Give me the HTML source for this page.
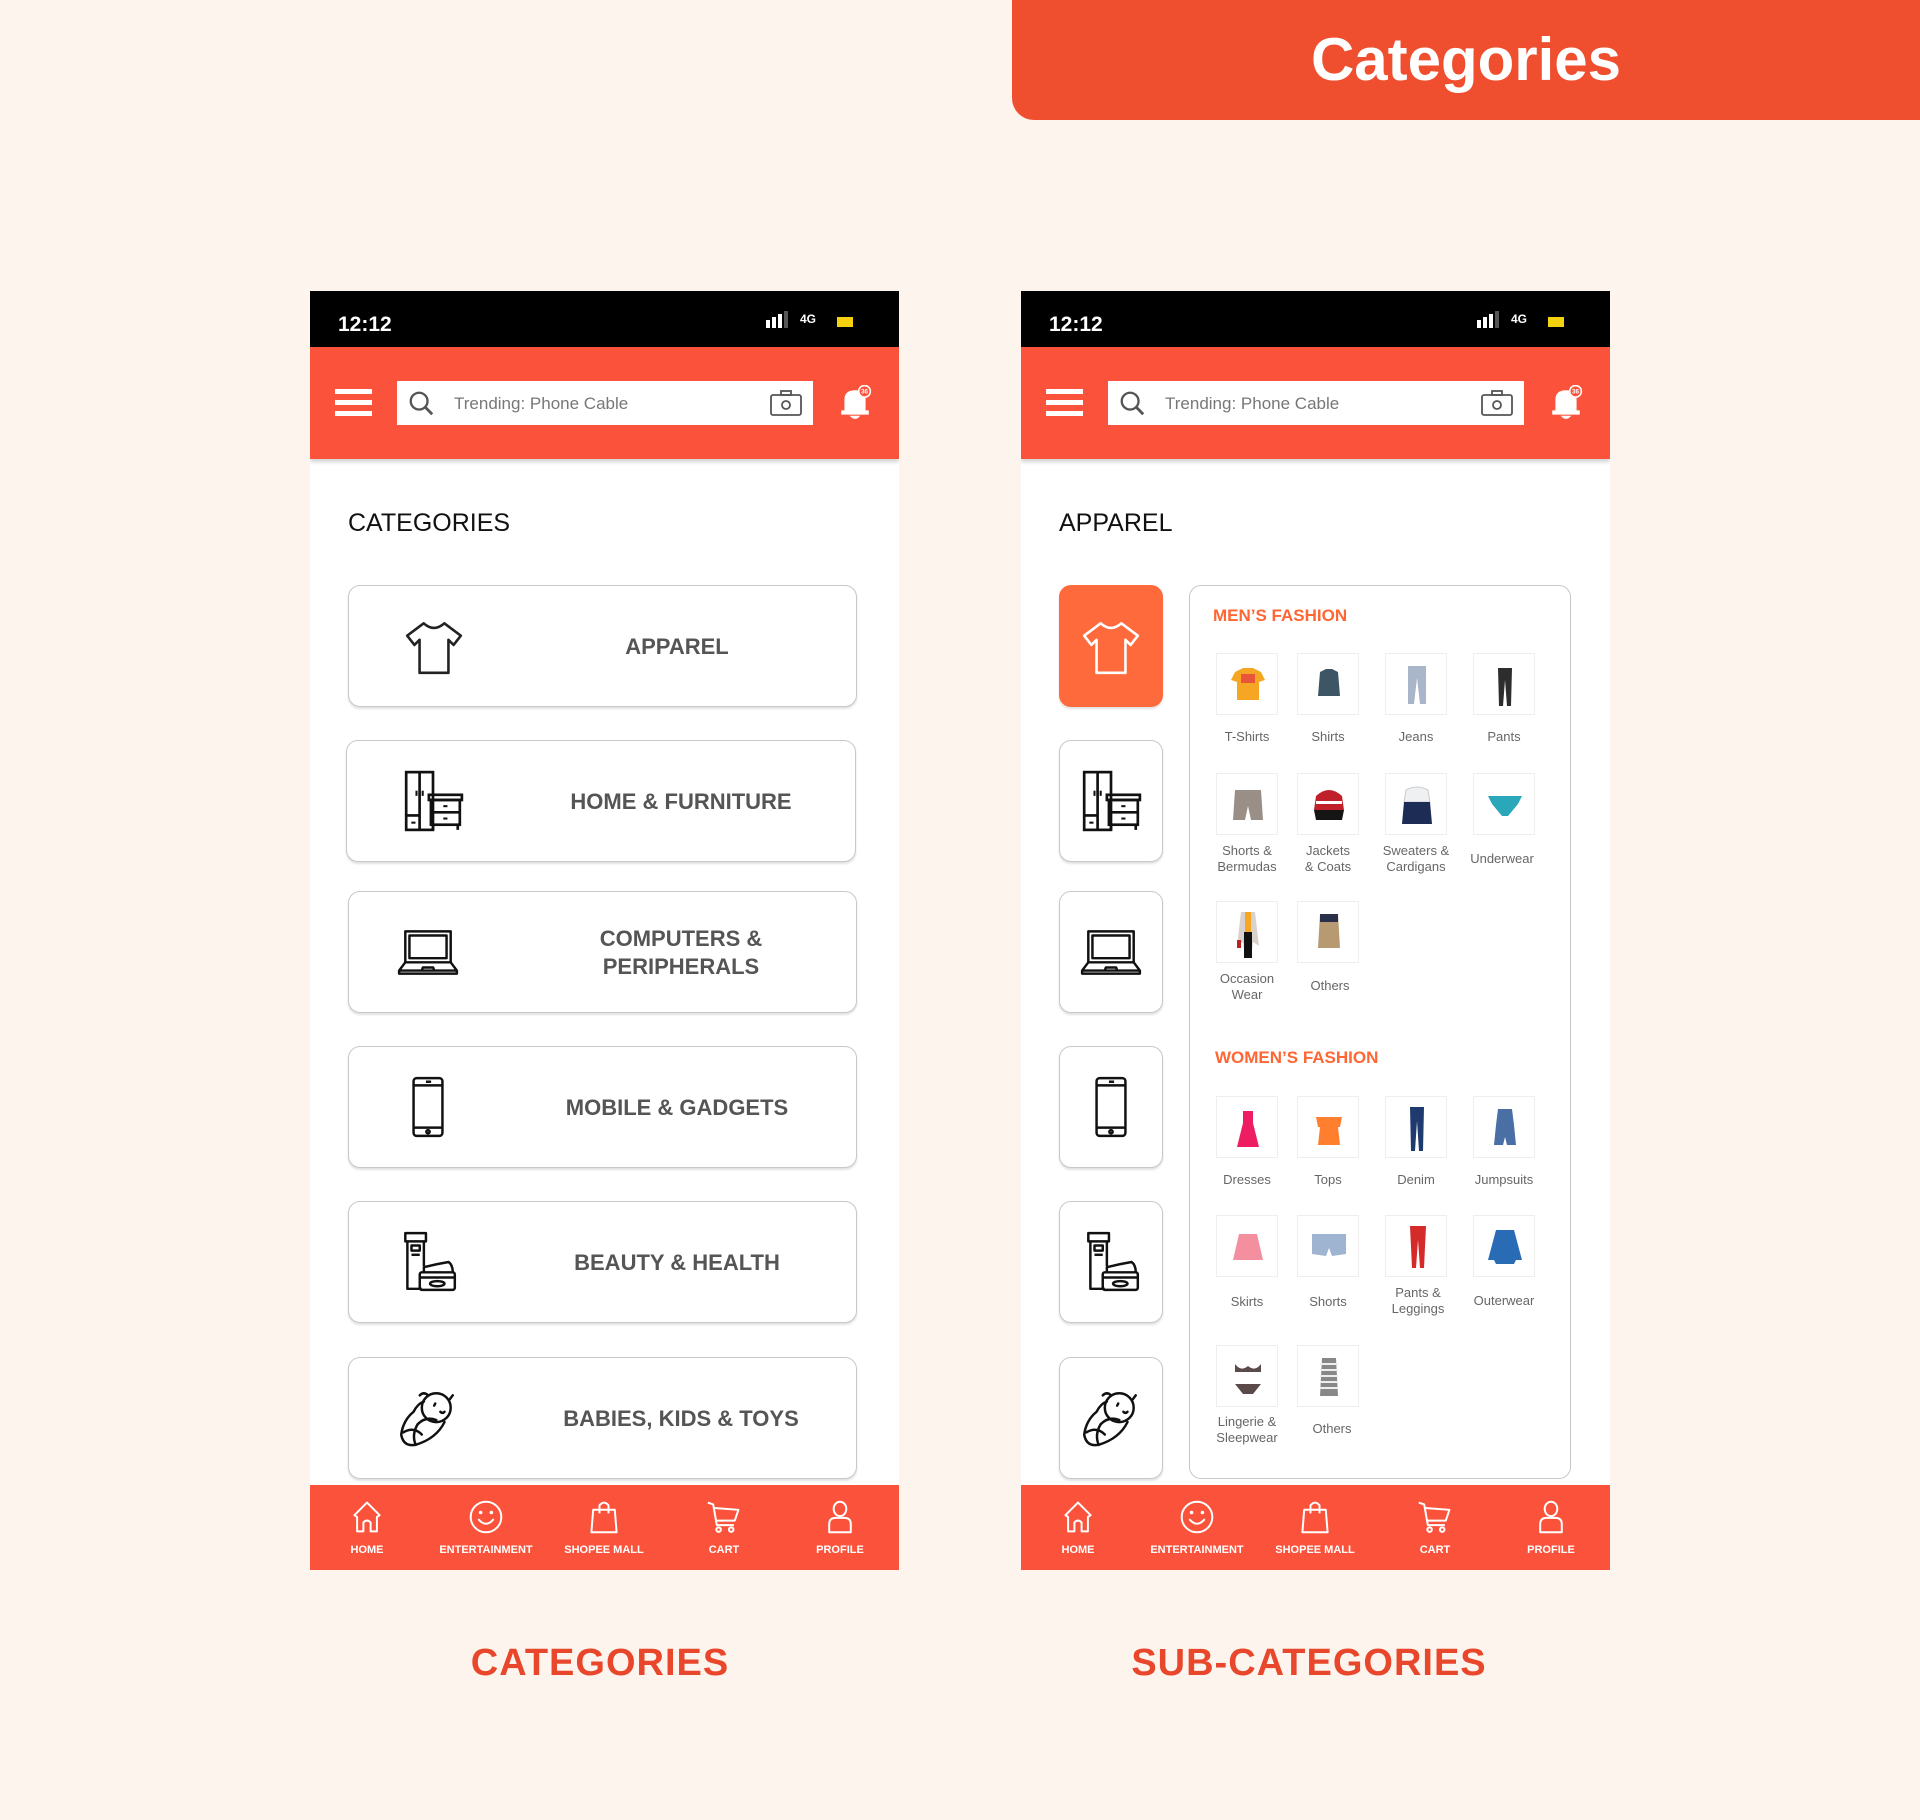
<!DOCTYPE html>
<html><head><meta charset="utf-8">
<style>
*{margin:0;padding:0;box-sizing:border-box}
body{width:1920px;height:1820px;background:#fdf4ee;position:relative;overflow:hidden;font-family:"Liberation Sans",sans-serif}
.abs{position:absolute}
.banner{left:1012px;top:0;width:908px;height:120px;background:#ef4f2e;border-radius:0 0 0 22px;color:#fff;font-weight:bold;font-size:60px;text-align:center;line-height:120px}
.phone{top:291px;width:589px;height:1279px;background:#fff;overflow:hidden}
.status{left:0;top:0;width:589px;height:56px;background:#000;color:#fff}
.time{left:28px;top:22px;font-size:21px;font-weight:bold}
.hdr{left:0;top:56px;width:589px;height:112px;background:#fb533b;box-shadow:0 3px 4px rgba(0,0,0,.18)}
.search{left:87px;top:34px;width:416px;height:44px;background:#fff}
.search span{position:absolute;left:57px;top:13px;font-size:17px;color:#777}
.title{font-size:25px;color:#111;top:218px}
.card{border:1.5px solid #c8c8c8;border-radius:12px;background:#fff;box-shadow:0 2px 2px rgba(0,0,0,.12)}
.ctext{position:absolute;color:#555;font-size:22px;font-weight:bold;text-align:center;line-height:28px}
.nav{left:0;top:1194px;width:589px;height:85px;background:#fb533b}
.ni{position:absolute;top:0;width:120px;margin-left:-60px;text-align:center;color:#fff;font-size:11px;font-weight:bold}
.ni svg{display:block;margin:14px auto 9px}
.lbl{color:#e8472b;font-weight:bold;font-size:38px;letter-spacing:1px;top:1642px;text-align:center;width:600px}
.sec{color:#ff6633;font-size:17px;font-weight:bold}
.it{position:absolute;width:62px;height:62px;border:1px solid #eee;background:#fff}
.il{position:absolute;width:90px;margin-left:-45px;text-align:center;font-size:13px;color:#666;line-height:16px}
</style></head><body>
<svg width="0" height="0" style="position:absolute">
<defs>
<symbol id="tee" viewBox="0 0 64 64"><path d="M22 10 Q32 19 42 10 L58 22 L51 31 L46 26 L46 58 L18 58 L18 26 L13 31 L6 22 Z" fill="none" stroke="#222" stroke-width="2.5" stroke-linejoin="round"/></symbol>
<symbol id="tee2" viewBox="0 0 64 64"><path d="M22 10 Q32 19 42 10 L58 22 L51 31 L46 26 L46 58 L18 58 L18 26 L13 31 L6 22 Z" fill="none" stroke="#fff" stroke-width="2.5" stroke-linejoin="round"/></symbol>
<symbol id="furn" viewBox="0 0 64 64"><g fill="none" stroke="#111" stroke-width="2.6"><rect x="6" y="4" width="26" height="56"/><line x1="19" y1="4" x2="19" y2="60"/><line x1="6" y1="46" x2="19" y2="46"/><rect x="28" y="26" width="32" height="5"/><rect x="30" y="31" width="28" height="24"/><line x1="30" y1="43" x2="58" y2="43"/><line x1="32" y1="55" x2="32" y2="60"/><line x1="56" y1="55" x2="56" y2="60"/></g><g fill="#111"><rect x="15" y="22" width="2" height="5"/><rect x="21" y="22" width="2" height="5"/><rect x="11" y="52" width="4" height="2"/><rect x="42" y="36" width="4" height="2"/><rect x="42" y="48" width="4" height="2"/></g></symbol>
<symbol id="lap" viewBox="0 0 64 64"><g fill="none" stroke="#111" stroke-width="2.4" stroke-linejoin="round"><rect x="10" y="12" width="44" height="30"/><rect x="14" y="16" width="36" height="22"/><path d="M10 42 L4 50 L4 53 L60 53 L60 50 L54 42"/><line x1="4" y1="50" x2="60" y2="50"/><path d="M26 50 L27 47 L37 47 L38 50"/></g></symbol>
<symbol id="mob" viewBox="0 0 64 64"><g fill="none" stroke="#111" stroke-width="2.4"><rect x="18" y="4" width="28" height="56" rx="3"/><line x1="18" y1="11" x2="46" y2="11"/><line x1="18" y1="52" x2="46" y2="52"/><circle cx="32" cy="56" r="1.6"/><line x1="30" y1="7.5" x2="35" y2="7.5"/></g></symbol>
<symbol id="bea" viewBox="0 0 64 64"><g fill="none" stroke="#111" stroke-width="2.4" stroke-linejoin="round"><rect x="10" y="4" width="20" height="8"/><path d="M12 12 L12 58 L26 58"/><path d="M28 12 L28 36"/><rect x="16" y="16" width="8" height="5"/><line x1="16" y1="25" x2="24" y2="25"/><rect x="24" y="42" width="34" height="17" rx="2"/><path d="M28 42 L28 37 Q40 34 52 32 Q56 35 56 42"/><line x1="24" y1="47" x2="58" y2="47"/><ellipse cx="41" cy="53" rx="7" ry="2.5"/></g></symbol>
<symbol id="baby" viewBox="0 0 64 64"><g fill="none" stroke="#111" stroke-width="2.4" stroke-linecap="round"><circle cx="40" cy="22" r="14"/><path d="M28 16 Q22 18 18 26 Q8 34 6 48 Q8 60 20 58 Q40 52 48 36"/><path d="M32 10 Q28 6 24 10"/><path d="M8 46 Q18 40 26 48"/><path d="M20 58 Q16 48 22 38 Q30 30 40 34"/><path d="M53 14 L56 10"/><path d="M38 20 L39 18"/><path d="M44 26 Q46 28 48 26"/></g></symbol>
<symbol id="home" viewBox="0 0 40 40"><path d="M6 18 L20 4 L34 18 L31 20 L31 36 L24 36 L24 26 Q20 22 16 26 L16 36 L9 36 L9 20 Z" fill="none" stroke="#fff" stroke-width="2.2" stroke-linejoin="round"/></symbol>
<symbol id="smile" viewBox="0 0 40 40"><g fill="none" stroke="#fff" stroke-width="2.2"><circle cx="20" cy="20" r="17"/><path d="M12 23 Q20 32 28 23" stroke-linecap="round"/></g><circle cx="14" cy="15" r="2" fill="#fff"/><circle cx="26" cy="15" r="2" fill="#fff"/></symbol>
<symbol id="bag" viewBox="0 0 40 40"><g fill="none" stroke="#fff" stroke-width="2.2" stroke-linejoin="round"><path d="M8 12 L32 12 L34 37 L6 37 Z"/><path d="M15 16 L15 7 Q20 1 25 7 L25 16"/></g></symbol>
<symbol id="cart" viewBox="0 0 40 40"><g fill="none" stroke="#fff" stroke-width="2.2" stroke-linejoin="round"><path d="M2 4 L8 6 L12 29 L31 29"/><path d="M9 10 L36 12 L32 24 L11 24"/><circle cx="14" cy="34" r="2.5"/><circle cx="28" cy="34" r="2.5"/></g></symbol>
<symbol id="user" viewBox="0 0 40 40"><g fill="none" stroke="#fff" stroke-width="2.2"><ellipse cx="20" cy="11" rx="7" ry="8"/><path d="M8 37 L8 28 Q8 21 15 21 L25 21 Q32 21 32 28 L32 37 Z" stroke-linejoin="round"/></g></symbol>
<symbol id="srch" viewBox="0 0 30 30"><circle cx="13" cy="13" r="9" fill="none" stroke="#555" stroke-width="2.5"/><line x1="20" y1="20" x2="27" y2="27" stroke="#555" stroke-width="3"/></symbol>
<symbol id="cam" viewBox="0 0 32 26"><g fill="none" stroke="#555" stroke-width="1.8"><rect x="1" y="5" width="30" height="20" rx="2"/><rect x="11" y="1" width="10" height="4"/><circle cx="16" cy="15" r="4"/></g></symbol>
<symbol id="bell" viewBox="0 0 34 34"><path d="M7 24 L7 14 Q7 5 17 5 Q27 5 27 14 L27 24 L30 24 L30 28 L4 28 L4 24 Z" fill="#fff"/><path d="M12 29 Q17 35 22 29 Z" fill="#fff"/><circle cx="26" cy="6" r="5.5" fill="#fb533b" stroke="#fff" stroke-width="1.5"/><text x="26" y="8" font-size="6" fill="#fff" text-anchor="middle" font-weight="bold" font-family="Liberation Sans">36</text></symbol>
</defs></svg>

<div class="abs banner">Categories</div>

<!-- LEFT PHONE -->
<div class="abs phone" style="left:310px">
 <div class="abs status">
  <div class="abs time">12:12</div>
  <div class="abs" style="left:456px;top:29px;width:4px;height:8px;background:#fff"></div>
  <div class="abs" style="left:462px;top:26px;width:4px;height:11px;background:#fff"></div>
  <div class="abs" style="left:468px;top:23px;width:4px;height:14px;background:#fff"></div>
  <div class="abs" style="left:474px;top:20px;width:4px;height:17px;background:#555"></div>
  <div class="abs" style="left:490px;top:21px;font-size:12px;font-weight:bold">4G</div>
  <div class="abs" style="left:527px;top:26px;width:16px;height:10px;background:#f5d20f"></div>
 </div>
 <div class="abs hdr">
  <div class="abs" style="left:25px;top:42px;width:37px;height:5px;background:#fff"></div>
  <div class="abs" style="left:25px;top:53px;width:37px;height:5px;background:#fff"></div>
  <div class="abs" style="left:25px;top:64px;width:37px;height:5px;background:#fff"></div>
  <div class="abs search"><svg class="abs" style="left:10px;top:8px" width="28" height="28"><use href="#srch"/></svg><span>Trending: Phone Cable</span><svg class="abs" style="left:373px;top:9px" width="32" height="26"><use href="#cam"/></svg></div>
  <svg class="abs" style="left:527px;top:38px" width="36" height="36"><use href="#bell"/></svg>
 </div>
 <div class="abs title" style="left:38px">CATEGORIES</div>
 <div class="abs card" style="left:38px;top:294px;width:509px;height:122px"><svg class="abs" style="left:52px;top:27px" width="66" height="66"><use href="#tee"/></svg><div class="ctext" style="left:158px;width:340px;top:47px">APPAREL</div></div>
 <div class="abs card" style="left:36px;top:449px;width:510px;height:122px"><svg class="abs" style="left:53px;top:27px" width="66" height="66"><use href="#furn"/></svg><div class="ctext" style="left:164px;width:340px;top:47px">HOME &amp; FURNITURE</div></div>
 <div class="abs card" style="left:38px;top:600px;width:509px;height:122px"><svg class="abs" style="left:46px;top:27px" width="66" height="66"><use href="#lap"/></svg><div class="ctext" style="left:162px;width:340px;top:33px">COMPUTERS &amp;<br>PERIPHERALS</div></div>
 <div class="abs card" style="left:38px;top:755px;width:509px;height:122px"><svg class="abs" style="left:46px;top:27px" width="66" height="66"><use href="#mob"/></svg><div class="ctext" style="left:158px;width:340px;top:47px">MOBILE &amp; GADGETS</div></div>
 <div class="abs card" style="left:38px;top:910px;width:509px;height:122px"><svg class="abs" style="left:46px;top:27px" width="66" height="66"><use href="#bea"/></svg><div class="ctext" style="left:158px;width:340px;top:47px">BEAUTY &amp; HEALTH</div></div>
 <div class="abs card" style="left:38px;top:1066px;width:509px;height:122px"><svg class="abs" style="left:46px;top:27px" width="66" height="66"><use href="#baby"/></svg><div class="ctext" style="left:162px;width:340px;top:47px">BABIES, KIDS &amp; TOYS</div></div>
 <div class="abs nav">
  <div class="ni" style="left:57px"><svg width="36" height="36"><use href="#home"/></svg>HOME</div>
  <div class="ni" style="left:176px"><svg width="36" height="36"><use href="#smile"/></svg>ENTERTAINMENT</div>
  <div class="ni" style="left:294px"><svg width="36" height="36"><use href="#bag"/></svg>SHOPEE MALL</div>
  <div class="ni" style="left:414px"><svg width="36" height="36"><use href="#cart"/></svg>CART</div>
  <div class="ni" style="left:530px"><svg width="36" height="36"><use href="#user"/></svg>PROFILE</div>
 </div>
</div>

<!-- RIGHT PHONE -->
<div class="abs phone" style="left:1021px">
 <div class="abs status">
  <div class="abs time">12:12</div>
  <div class="abs" style="left:456px;top:29px;width:4px;height:8px;background:#fff"></div>
  <div class="abs" style="left:462px;top:26px;width:4px;height:11px;background:#fff"></div>
  <div class="abs" style="left:468px;top:23px;width:4px;height:14px;background:#fff"></div>
  <div class="abs" style="left:474px;top:20px;width:4px;height:17px;background:#555"></div>
  <div class="abs" style="left:490px;top:21px;font-size:12px;font-weight:bold">4G</div>
  <div class="abs" style="left:527px;top:26px;width:16px;height:10px;background:#f5d20f"></div>
 </div>
 <div class="abs hdr">
  <div class="abs" style="left:25px;top:42px;width:37px;height:5px;background:#fff"></div>
  <div class="abs" style="left:25px;top:53px;width:37px;height:5px;background:#fff"></div>
  <div class="abs" style="left:25px;top:64px;width:37px;height:5px;background:#fff"></div>
  <div class="abs search"><svg class="abs" style="left:10px;top:8px" width="28" height="28"><use href="#srch"/></svg><span>Trending: Phone Cable</span><svg class="abs" style="left:373px;top:9px" width="32" height="26"><use href="#cam"/></svg></div>
  <svg class="abs" style="left:527px;top:38px" width="36" height="36"><use href="#bell"/></svg>
 </div>
 <div class="abs title" style="left:38px">APPAREL</div>
 <div class="abs card" style="left:38px;top:294px;width:104px;height:122px;background:#ff6a3d;border-color:#ff6a3d"><svg class="abs" style="left:18px;top:27px" width="66" height="66"><use href="#tee2"/></svg></div>
 <div class="abs card" style="left:38px;top:449px;width:104px;height:122px"><svg class="abs" style="left:18px;top:27px" width="66" height="66"><use href="#furn"/></svg></div>
 <div class="abs card" style="left:38px;top:600px;width:104px;height:122px"><svg class="abs" style="left:18px;top:27px" width="66" height="66"><use href="#lap"/></svg></div>
 <div class="abs card" style="left:38px;top:755px;width:104px;height:122px"><svg class="abs" style="left:18px;top:27px" width="66" height="66"><use href="#mob"/></svg></div>
 <div class="abs card" style="left:38px;top:910px;width:104px;height:122px"><svg class="abs" style="left:18px;top:27px" width="66" height="66"><use href="#bea"/></svg></div>
 <div class="abs card" style="left:38px;top:1066px;width:104px;height:122px"><svg class="abs" style="left:18px;top:27px" width="66" height="66"><use href="#baby"/></svg></div>
 <div class="abs card" style="left:168px;top:294px;width:382px;height:894px;box-shadow:none"></div>
 <div class="abs nav">
  <div class="ni" style="left:57px"><svg width="36" height="36"><use href="#home"/></svg>HOME</div>
  <div class="ni" style="left:176px"><svg width="36" height="36"><use href="#smile"/></svg>ENTERTAINMENT</div>
  <div class="ni" style="left:294px"><svg width="36" height="36"><use href="#bag"/></svg>SHOPEE MALL</div>
  <div class="ni" style="left:414px"><svg width="36" height="36"><use href="#cart"/></svg>CART</div>
  <div class="ni" style="left:530px"><svg width="36" height="36"><use href="#user"/></svg>PROFILE</div>
 </div>
</div>

<div class="abs sec" style="left:1213px;top:606px">MEN’S FASHION</div>
<div class="abs sec" style="left:1215px;top:1048px">WOMEN’S FASHION</div>

<div class="it" style="left:1216px;top:653px"><svg width="62" height="62"><path d="M18 18 L26 14 L36 14 L44 18 L48 26 L42 28 L42 46 L20 46 L20 28 L14 26 Z" fill="#f5a623"/><rect x="24" y="20" width="14" height="9" fill="#e8553b"/></svg></div>
<div class="it" style="left:1297px;top:653px"><svg width="62" height="62"><path d="M22 18 L28 15 L34 15 L40 18 L42 42 L20 42 Z" fill="#3e5566"/></svg></div>
<div class="it" style="left:1385px;top:653px"><svg width="62" height="62"><path d="M22 12 L40 12 L40 50 L34 50 L31 24 L28 50 L22 50 Z" fill="#a9b6c9"/></svg></div>
<div class="it" style="left:1473px;top:653px"><svg width="62" height="62"><path d="M24 14 L38 14 L37 52 L33 52 L31 26 L29 52 L25 52 Z" fill="#2d2d2d"/></svg></div>
<div class="il" style="left:1247px;top:729px">T-Shirts</div>
<div class="il" style="left:1328px;top:729px">Shirts</div>
<div class="il" style="left:1416px;top:729px">Jeans</div>
<div class="il" style="left:1504px;top:729px">Pants</div>
<div class="it" style="left:1216px;top:773px"><svg width="62" height="62"><path d="M18 16 L44 16 L46 46 L34 46 L31 32 L28 46 L16 46 Z" fill="#9a8f86"/></svg></div>
<div class="it" style="left:1297px;top:773px"><svg width="62" height="62"><path d="M18 22 Q31 10 44 22 L46 36 L16 36 Z" fill="#c0202a"/><path d="M16 36 L46 36 L44 46 L18 46 Z" fill="#151515"/><rect x="18" y="27" width="26" height="3" fill="#fff"/></svg></div>
<div class="it" style="left:1385px;top:773px"><svg width="62" height="62"><path d="M20 16 Q31 10 42 16 L44 28 L18 28 Z" fill="#eef0f2" stroke="#ccc"/><path d="M18 28 L44 28 L46 50 L16 50 Z" fill="#1c2c55"/></svg></div>
<div class="it" style="left:1473px;top:773px"><svg width="62" height="62"><path d="M14 22 L48 22 L44 30 L34 42 L28 42 L18 30 Z" fill="#2aa7b8"/></svg></div>
<div class="il" style="left:1247px;top:843px">Shorts &amp;<br>Bermudas</div>
<div class="il" style="left:1328px;top:843px">Jackets<br>&amp; Coats</div>
<div class="il" style="left:1416px;top:843px">Sweaters &amp;<br>Cardigans</div>
<div class="il" style="left:1502px;top:851px">Underwear</div>
<div class="it" style="left:1216px;top:901px"><svg width="62" height="62"><path d="M24 10 L38 10 L42 44 L36 40 L34 56 L28 56 L26 40 L20 44 Z" fill="#d9d2cc"/><rect x="28" y="10" width="6" height="20" fill="#f5a623"/><path d="M27 30 L35 30 L35 56 L27 56 Z" fill="#111"/><rect x="20" y="38" width="4" height="8" fill="#b22"/></svg></div>
<div class="it" style="left:1297px;top:901px"><svg width="62" height="62"><path d="M22 12 L40 12 L42 46 L20 46 Z" fill="#b79a72"/><rect x="22" y="12" width="18" height="8" fill="#2a2f4a"/></svg></div>
<div class="il" style="left:1247px;top:971px">Occasion<br>Wear</div>
<div class="il" style="left:1330px;top:978px">Others</div>

<div class="it" style="left:1216px;top:1096px"><svg width="62" height="62"><path d="M26 14 L36 14 L36 26 L42 50 L20 50 L26 26 Z" fill="#ee1d62"/></svg></div>
<div class="it" style="left:1297px;top:1096px"><svg width="62" height="62"><path d="M18 20 L44 20 L42 30 L40 30 L42 48 L20 48 L22 30 L20 30 Z" fill="#ff7f2e"/></svg></div>
<div class="it" style="left:1385px;top:1096px"><svg width="62" height="62"><path d="M24 10 L38 10 L37 54 L33 54 L31 24 L29 54 L25 54 Z" fill="#1e3a6e"/></svg></div>
<div class="it" style="left:1473px;top:1096px"><svg width="62" height="62"><path d="M24 12 L38 12 L40 28 L42 48 L33 48 L31 40 L29 48 L20 48 L22 28 Z" fill="#4a6fa5"/></svg></div>
<div class="il" style="left:1247px;top:1172px">Dresses</div>
<div class="il" style="left:1328px;top:1172px">Tops</div>
<div class="il" style="left:1416px;top:1172px">Denim</div>
<div class="il" style="left:1504px;top:1172px">Jumpsuits</div>
<div class="it" style="left:1216px;top:1215px"><svg width="62" height="62"><path d="M22 18 L40 18 L46 44 L16 44 Z" fill="#f48fa0"/></svg></div>
<div class="it" style="left:1297px;top:1215px"><svg width="62" height="62"><path d="M14 18 L48 18 L48 38 L34 40 L31 32 L28 40 L14 38 Z" fill="#9fb4d0"/></svg></div>
<div class="it" style="left:1385px;top:1215px"><svg width="62" height="62"><path d="M24 10 L40 10 L38 52 L34 52 L32 24 L30 52 L26 52 Z" fill="#d42a2a"/></svg></div>
<div class="it" style="left:1473px;top:1215px"><svg width="62" height="62"><path d="M22 14 L40 14 L48 44 L42 44 L40 48 L22 48 L20 44 L14 44 Z" fill="#2a6bb5"/></svg></div>
<div class="il" style="left:1247px;top:1294px">Skirts</div>
<div class="il" style="left:1328px;top:1294px">Shorts</div>
<div class="il" style="left:1418px;top:1285px">Pants &amp;<br>Leggings</div>
<div class="il" style="left:1504px;top:1293px">Outerwear</div>
<div class="it" style="left:1216px;top:1345px"><svg width="62" height="62"><path d="M18 18 Q24 26 31 20 Q38 26 44 18 L44 26 L18 26 Z" fill="#5a4a4a"/><path d="M18 38 L44 38 L36 48 L26 48 Z" fill="#5a4a4a"/></svg></div>
<div class="it" style="left:1297px;top:1345px"><svg width="62" height="62"><path d="M24 12 L38 12 L40 50 L22 50 Z" fill="#888"/><path d="M22 18 L40 18 M22 24 L40 24 M22 30 L40 30 M22 36 L40 36 M22 42 L40 42" stroke="#eee" stroke-width="2"/></svg></div>
<div class="il" style="left:1247px;top:1414px">Lingerie &amp;<br>Sleepwear</div>
<div class="il" style="left:1332px;top:1421px">Others</div>

<div class="abs lbl" style="left:300px">CATEGORIES</div>
<div class="abs lbl" style="left:1009px">SUB-CATEGORIES</div>
</body></html>
